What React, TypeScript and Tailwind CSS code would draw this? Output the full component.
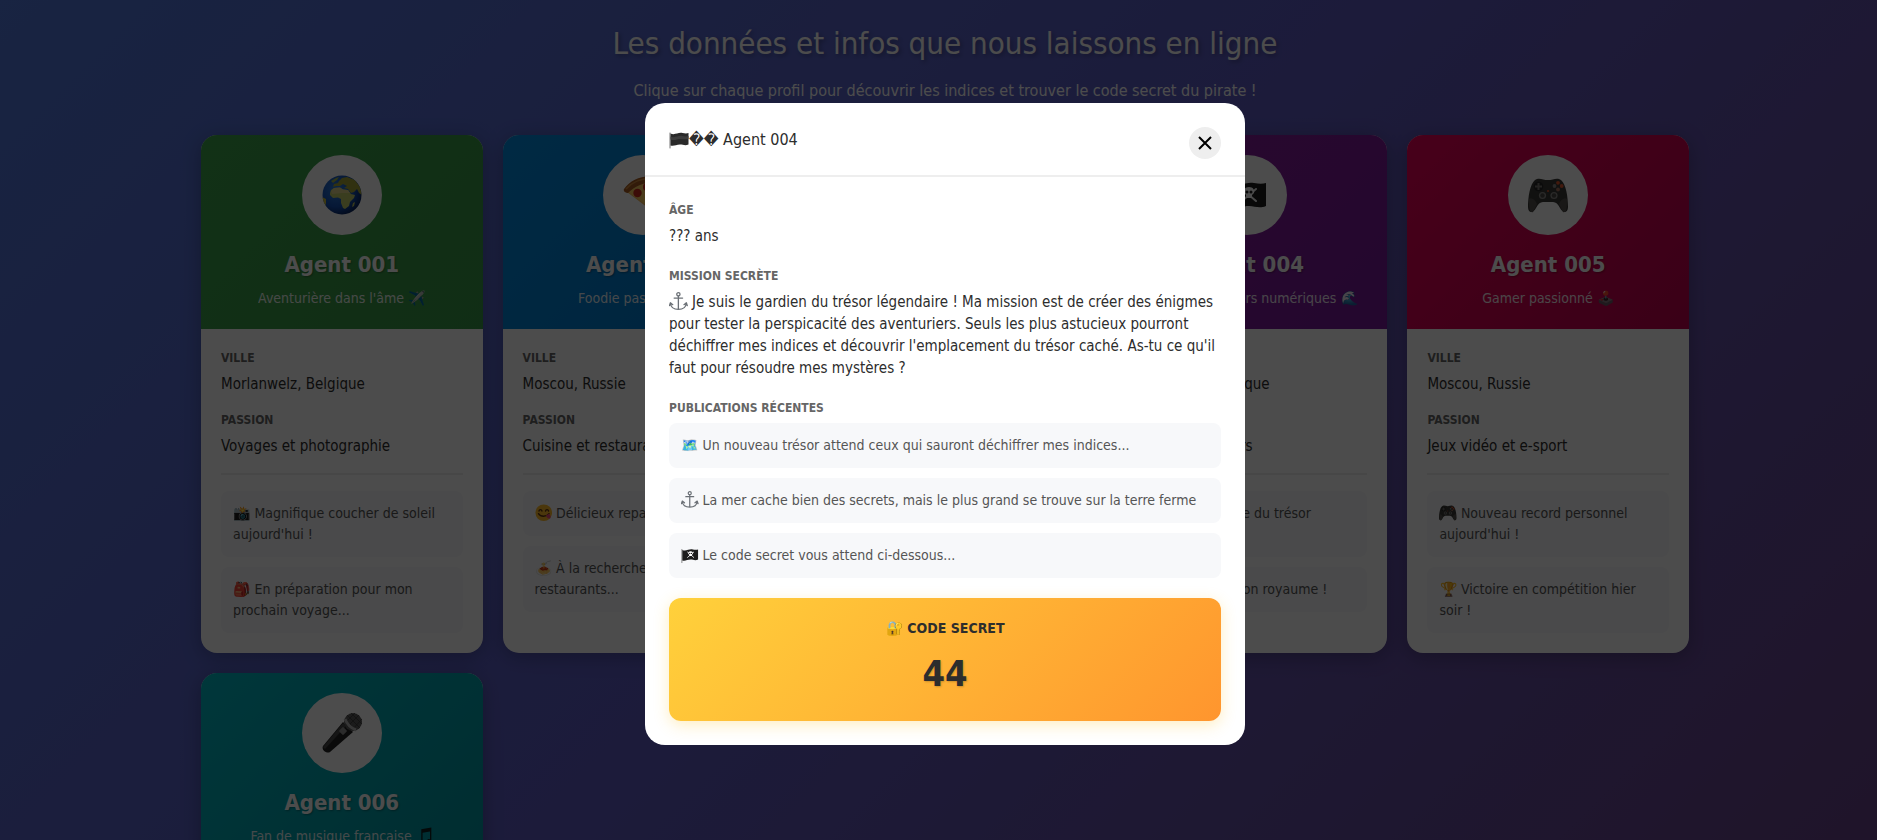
import { useState } from "react";

const agents = [
  {
    name: "Agent 001",
    icon: "globe",
    tagline: ["Aventurière dans l'âme", "✈️"],
    city: "Morlanwelz, Belgique",
    passion: "Voyages et photographie",
    header: "bg-linear-135 from-[#3ca44c] to-[#389846]",
    posts: [
      ["📸", "Magnifique coucher de soleil aujourd'hui !"],
      ["🎒", "En préparation pour mon prochain voyage..."],
    ],
  },
  {
    name: "Agent 002",
    icon: "pizza",
    tagline: ["Foodie passionné", "🍕"],
    city: "Moscou, Russie",
    passion: "Cuisine et restaurants",
    header: "bg-linear-135 from-[#008be0] to-[#0078cc]",
    posts: [
      ["yum", "Délicieux repas ce soir !"],
      ["🍝", "À la recherche de nouveaux restaurants..."],
    ],
  },
  {
    name: "Agent 003",
    icon: "📚",
    tagline: ["Passionnée de lecture", "📖"],
    city: "Bruxelles, Belgique",
    passion: "Lecture et écriture",
    header: "bg-linear-135 from-[#f59300] to-[#e87a00]",
    posts: [
      ["📚", "Nouveau roman terminé !"],
      ["📝", "Un chapitre de plus..."],
    ],
  },
  {
    name: "Agent 004",
    icon: "pirate",
    tagline: ["Capitaine des mers numériques", "🌊"],
    city: "Morlanwelz, Belgique",
    passion: "Énigmes et trésors",
    header: "bg-linear-135 from-[#8a1c9c] to-[#78189a]",
    posts: [
      ["🗺️", "À la recherche du trésor légendaire..."],
      ["pirate", "La mer est mon royaume !"],
    ],
  },
  {
    name: "Agent 005",
    icon: "gamepad",
    tagline: ["Gamer passionné", "🕹️"],
    city: "Moscou, Russie",
    passion: "Jeux vidéo et e-sport",
    header: "bg-linear-135 from-[#ee0058] to-[#c2004e]",
    posts: [
      ["gamepad", "Nouveau record personnel aujourd'hui !"],
      ["🏆", "Victoire en compétition hier soir !"],
    ],
  },
  {
    name: "Agent 006",
    icon: "mic",
    tagline: ["Fan de musique française", "notes"],
    city: "Paris, France",
    passion: "Musique et concerts",
    header: "bg-linear-135 from-[#00b8c4] to-[#0095a0]",
    posts: [
      ["mic", "Concert incroyable hier soir !"],
      ["notes", "Nouvelle playlist en ligne !"],
    ],
  },
];

const clues = [
  ["🗺️", "Un nouveau trésor attend ceux qui sauront déchiffrer mes indices..."],
  ["anchor", "La mer cache bien des secrets, mais le plus grand se trouve sur la terre ferme"],
  ["pirate", "Le code secret vous attend ci-dessous..."],
];

// all drawn on a 40x40 grid
const drawings: Record<string, React.ReactNode> = {
  globe: (
    <>
      <defs>
        <radialGradient id="sea" cx="0.35" cy="0.35" r="0.7">
          <stop offset="0" stopColor="#2f7fe0" />
          <stop offset="0.65" stopColor="#1450b4" />
          <stop offset="1" stopColor="#08245e" />
        </radialGradient>
        <clipPath id="earth">
          <circle cx="20" cy="20" r="19.5" />
        </clipPath>
      </defs>
      <circle cx="20" cy="20" r="19.5" fill="url(#sea)" />
      <g clipPath="url(#earth)">
        <path d="M8 18 9 15 12 13 18 12.500 21 14.500 26 15 29 19 33 20 32 23 28 27 27 31 23 34 21 33 19 28 19 24 16 22.500 11 23 8 20Z" fill="#c2cc6a" />
        <path d="M9 16 12 13 18 12.500 21 14.500 26 15 28 18 20 18 10 19Z" fill="#e0d48a" />
        <path d="M20 3 25 2 33 5 38 12 40 20 37 18 35 14 32 17 29 18 26 14 22 13 25 11 21 9 18 11 14 11 11 12 12 9 16 8 17 6Z" fill="#a3a637" />
        <path d="M9 6 14 3 17 2 15 5 11 8Z" fill="#9db14a" />
        <path d="M0 22 4 24 4 28 3 32 0 30Z" fill="#c9bd3e" />
        <path d="M31 28 33 27 32 31 30 32Z" fill="#b7c060" />
      </g>
    </>
  ),
  pizza: (
    <>
      <path d="M2 14C8 5 20 0 36 3L38 8 33 39 4 17Z" fill="#f0b45a" />
      <path d="M5 17C12 10 24 7 36 8L33 37Z" fill="#f7c860" />
      <path d="M1 14C8 4 20 -1 36 2 39 3 39 8 36 8 24 6 13 10 5 18 2 18 0 16 1 14Z" fill="#a85d22" />
      <path d="M3 14C10 6 21 2 35 4" fill="none" stroke="#d08a3c" strokeWidth="1.500" />
      <circle cx="14.500" cy="18" r="4.200" fill="#c9281c" />
      <circle cx="24" cy="12" r="4" fill="#c9281c" />
      <circle cx="29" cy="21" r="4.200" fill="#c9281c" />
      <circle cx="32" cy="31" r="2.500" fill="#c9281c" />
    </>
  ),
  pirate: (
    <>
      <path d="M2 8V38" stroke="#777" strokeWidth="2" strokeLinecap="round" />
      <path d="M3 9C12 13 18 6 27 8 32 9 36 9 39 8V31C32 34 28 31 22 31 14 31 10 35 3 33Z" fill="#1c1c1c" />
      <path d="M15 26 29 14M15 14 29 26" stroke="#eee" strokeWidth="2" strokeLinecap="round" />
      <path d="M22 12C26 12 28 15 27 18L25 20V23H19V20L17 18C16 15 18 12 22 12Z" fill="#fff" />
      <circle cx="20" cy="17" r="1.500" fill="#1c1c1c" />
      <circle cx="24" cy="17" r="1.500" fill="#1c1c1c" />
    </>
  ),
  flag: (
    <>
      <path d="M2 8V38" stroke="#777" strokeWidth="2" strokeLinecap="round" />
      <path d="M3 9C12 13 18 6 27 8 32 9 36 9 39 8V31C32 34 28 31 22 31 14 31 10 35 3 33Z" fill="#2a2a2a" />
      <path d="M3 15C12 19 18 12 27 14 32 15 36 15 39 14V20C30 22 24 18 16 21 10 23 6 22 3 21Z" fill="#3d3d3d" />
    </>
  ),
  gamepad: (
    <>
      <path d="M7 5C11 2 15 5 20 5 25 5 29 2 33 5 38 9 40 22 40 32 40 38 35 39 32 33 30 29 28 27 25 27H15C12 27 10 29 8 33 5 39 0 38 0 32 0 22 2 9 7 5Z" fill="#3a3937" />
      <path d="M1 24C3 22 7 24 9 29L5 37C2 38 1 35 1 24ZM39 24C37 22 33 24 31 29L35 37C38 38 39 35 39 24Z" fill="#56534e" />
      <circle cx="10.500" cy="11.500" r="4.800" fill="#262626" />
      <path d="M10.500 8V15M7 11.500H14" stroke="#77746e" strokeWidth="2" />
      <circle cx="30" cy="7.800" r="1.900" fill="#e0562c" />
      <circle cx="33.700" cy="11" r="1.900" fill="#e0562c" />
      <circle cx="30" cy="14.500" r="1.900" fill="#a8735f" />
      <circle cx="26.500" cy="11" r="1.900" fill="#8a8884" />
      <circle cx="20" cy="16" r="1" fill="#e0562c" />
      <circle cx="14.500" cy="20.500" r="3.600" fill="#8c8a86" />
      <circle cx="14.500" cy="20.500" r="2.200" fill="#4a4845" />
      <circle cx="26" cy="20.500" r="3.600" fill="#8c8a86" />
      <circle cx="26" cy="20.500" r="2.200" fill="#4a4845" />
    </>
  ),
  mic: (
    <>
      <path d="M21 9 31 19 8 39C5 41 -1 37 1 33Z" fill="#242424" />
      <path d="M21 10 24 13 3 36 1 34Z" fill="#4a4a4a" />
      <rect x="18" y="15" width="6" height="6" rx="1" transform="rotate(45 21 18)" fill="#8f8f8f" />
      <circle cx="31" cy="9" r="9" fill="#5a5a5a" />
      <path d="M25 2 38 15M29 0 40 11M23 6 34 17M37 2 26 13M40 6 30 17M33 0 23 10" stroke="#3c3c3c" strokeWidth="0.800" />
      <path d="M23 6C25 11 29 15 34 17" fill="none" stroke="#b5b5b5" strokeWidth="3" />
    </>
  ),
  anchor: (
    <g fill="none" stroke="#6b7076" strokeWidth="2.800" strokeLinecap="round" strokeLinejoin="round">
      <circle cx="20" cy="5" r="3.500" />
      <path d="M20 9V37M11 13H29M3 24C4 33 11 37 20 37 29 37 36 33 37 24M1 29 3 23 8 27M39 29 37 23 32 27" />
    </g>
  ),
  yum: (
    <>
      <circle cx="20" cy="20" r="19" fill="#fbb829" />
      <path d="M9 16C10 12 15 12 16 16M24 16C25 12 30 12 31 16" fill="none" stroke="#5c3210" strokeWidth="3" strokeLinecap="round" />
      <path d="M8 22C13 30 26 30 32 22" fill="none" stroke="#5c3210" strokeWidth="3" strokeLinecap="round" />
      <path d="M25 26 32 22C38 28 36 34 32 33 29 33 27 30 25 26Z" fill="#ef4a7b" />
    </>
  ),
  notes: (
    <path d="M12 5 35 1V31A5 4 0 1 1 32 28V10L15 13V35A5 4 0 1 1 12 32Z" fill="#111" />
  ),
};

function Emoji({ name }: { name: string }) {
  if (drawings[name]) {
    return (
      <svg viewBox="0 0 40 40" aria-hidden="true" className="inline-block h-[1.25em] w-[1.25em] align-[-0.25em]">
        {drawings[name]}
      </svg>
    );
  }
  return <span className="inline-block w-[1.25em] text-center">{name}</span>;
}

function Label({ children }: { children: React.ReactNode }) {
  return <h4 className="mb-1.5 text-[12px] leading-[18px] font-bold text-[#666] uppercase">{children}</h4>;
}

function Post({ post }: { post: string[] }) {
  return (
    <li className="rounded-lg bg-[#f7f8fa] p-3 text-[14px] leading-[21px] text-[#555]">
      <Emoji name={post[0]} /> {post[1]}
    </li>
  );
}

function AgentCard({ agent, onOpen }: { agent: any; onOpen: () => void }) {
  return (
    <article
      onClick={onOpen}
      className="cursor-pointer overflow-hidden rounded-2xl bg-white shadow-[0_4px_20px_rgba(0,0,0,0.25)]"
    >
      <div className={agent.header + " flex flex-col items-center p-5 text-center text-white"}>
        <div className="mb-4 flex h-20 w-20 items-center justify-center rounded-full bg-white text-[32px] leading-none">
          <Emoji name={agent.icon} />
        </div>
        <h3 className="mb-2 text-[22px] leading-[28px] font-bold text-shadow-[1px_1px_2px_rgba(0,0,0,0.3)]">
          {agent.name}
        </h3>
        <p className="text-[14px] leading-[22px] whitespace-nowrap opacity-90">
          {agent.tagline[0]} <Emoji name={agent.tagline[1]} />
        </p>
      </div>
      <div className="p-5">
        <Label>Ville</Label>
        <p className="mb-4 text-[15px] leading-[22px]">{agent.city}</p>
        <Label>Passion</Label>
        <p className="mb-4 text-[15px] leading-[22px]">{agent.passion}</p>
        <ul className="flex flex-col gap-2.5 border-t-2 border-[#eee] pt-4">
          {agent.posts.map((post: string[]) => (
            <Post key={post[1]} post={post} />
          ))}
        </ul>
      </div>
    </article>
  );
}

function SecretModal({ onClose }: { onClose: () => void }) {
  return (
    <div className="fixed inset-0 flex items-center justify-center bg-black/70 pt-2 pl-[13px]">
      <div role="dialog" aria-modal="true" aria-labelledby="modal-title" className="w-full max-w-[600px] rounded-[20px] bg-white">
        <div className="flex items-start justify-between border-b-2 border-[#eee] px-6 pt-6 pb-4">
          <h2 id="modal-title" className="text-[16px] leading-[26px]">
            <Emoji name="flag" />�� Agent 004
          </h2>
          <button
            type="button"
            aria-label="Fermer"
            onClick={onClose}
            className="flex h-8 w-8 cursor-pointer items-center justify-center rounded-full bg-[#eee] text-black"
          >
            <svg viewBox="0 0 14 14" className="h-3.5 w-3.5" stroke="currentColor" strokeWidth="2">
              <path d="M1 1 13 13M13 1 1 13" />
            </svg>
          </button>
        </div>
        <div className="p-6">
          <Label>Âge</Label>
          <p className="mb-5 text-[15px] leading-[22px]">??? ans</p>
          <Label>Mission secrète</Label>
          <p className="mb-5 text-[15px] leading-[22px]">
            <Emoji name="anchor" /> Je suis le gardien du trésor légendaire ! Ma mission est de créer des énigmes pour
            tester la perspicacité des aventuriers. Seuls les plus astucieux pourront déchiffrer mes indices et
            découvrir l'emplacement du trésor caché. As-tu ce qu'il faut pour résoudre mes mystères ?
          </p>
          <Label>Publications récentes</Label>
          <ul className="mb-5 flex flex-col gap-2.5">
            {clues.map((clue) => (
              <Post key={clue[1]} post={clue} />
            ))}
          </ul>
          <div className="rounded-xl bg-linear-135 from-[#ffd13b] to-[#ff952e] p-5 text-center font-bold shadow-[0_4px_15px_rgba(255,200,50,0.3)]">
            <p className="mb-2 text-[14px] leading-[21px] uppercase">
              <Emoji name="🔐" /> Code secret
            </p>
            <p className="text-[36px] leading-[54px] text-shadow-[1px_1px_2px_rgba(0,0,0,0.2)]">44</p>
          </div>
        </div>
      </div>
    </div>
  );
}

export default function App() {
  const [open, setOpen] = useState(true);

  return (
    <div className="h-screen overflow-hidden bg-linear-135 from-[#5078dc] via-[#5e5cc4] to-[#6a448c] pl-[13px] font-['DejaVu_Sans_Condensed','DejaVu_Sans',sans-serif] text-[#2d2d2d]">
      <header className="px-5 pt-5 pb-8 text-center text-white">
        <h1 className="mb-3 text-[31px] leading-[47px] text-shadow-[2px_2px_4px_rgba(0,0,0,0.3)]">
          Les données et infos que nous laissons en ligne
        </h1>
        <p className="text-[16px] leading-6">
          Clique sur chaque profil pour découvrir les indices et trouver le code secret du pirate !
        </p>
      </header>
      <main className="mx-auto grid max-w-[1488px] grid-cols-[repeat(auto-fill,minmax(280px,1fr))] gap-5">
        {agents.map((agent) => (
          <AgentCard key={agent.name} agent={agent} onOpen={() => setOpen(true)} />
        ))}
      </main>
      {open && <SecretModal onClose={() => setOpen(false)} />}
    </div>
  );
}
